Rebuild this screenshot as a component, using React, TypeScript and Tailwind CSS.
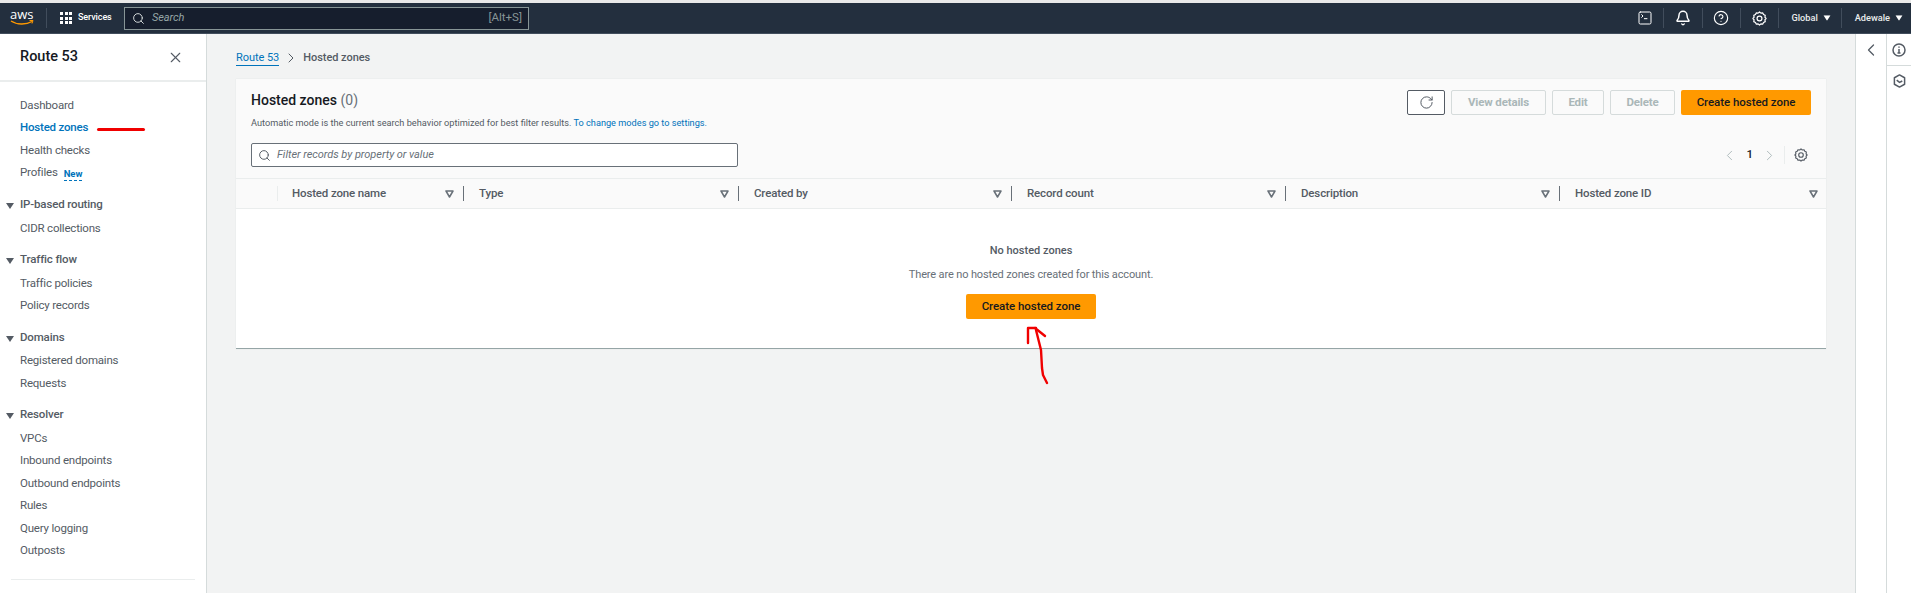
import { Search, X, ChevronLeft, ChevronRight, RotateCw, Bell, CircleHelp, SquareTerminal } from "lucide-react";

const font = "[font-family:Roboto,'Liberation_Sans',sans-serif]";

function Caret({ className = "" }: { className?: string }) {
  return (
    <svg width="8" height="6" viewBox="0 0 8 6" className={className}>
      <path d="M0 0h8L4 6z" fill="currentColor" />
    </svg>
  );
}

function Gear({ size = 16, className = "" }: { size?: number; className?: string }) {
  return (
    <svg width={size} height={size} viewBox="0 0 16 16" fill="none" stroke="currentColor" strokeWidth="1.3" className={className}>
      <path d="M8 1l1.5 1.3 2-.2.8 1.7 1.8.9-.3 2L15 8l-1.2 1.3.3 2-1.8.9-.8 1.7-2-.2L8 15l-1.5-1.3-2 .2-.8-1.7-1.8-.9.3-2L1 8l1.2-1.3-.3-2 1.8-.9.8-1.7 2 .2z" strokeLinejoin="round" />
      <circle cx="8" cy="8" r="2.6" />
    </svg>
  );
}

function NavLink({ label, active, badge }: { label: string; active?: boolean; badge?: boolean }) {
  return (
    <div className={`h-[22.5px] flex items-center pl-5 text-[11.5px] tracking-[-0.2px] ${active ? "text-[#0073bb] font-medium" : "text-[#545b64]"}`}>
      <span>{label}</span>
      {active && <span className="ml-[9px] mt-[3px] h-[3px] w-[48px] rounded-full bg-[#f00000]" />}
      {badge && <span className="ml-[6px] text-[9.5px] font-bold tracking-normal text-[#0073bb] border-b border-dashed border-[#0073bb] leading-[13px] mt-[3px]">New</span>}
    </div>
  );
}

function NavSection({ label, items, mb = "mb-[8.5px]" }: { label: string; items: string[]; mb?: string }) {
  return (
    <div className={mb}>
      <div className="h-[24px] flex items-center text-[11.5px] tracking-[-0.15px] font-medium text-[#545b64]">
        <Caret className="ml-[6px] mr-[6px] mt-[2px] text-[#545b64]" />
        <span>{label}</span>
      </div>
      {items.map((i) => (
        <NavLink key={i} label={i} />
      ))}
    </div>
  );
}

function Sidebar() {
  return (
    <aside className="w-[207px] shrink-0 bg-white border-r border-[#d5dbdb] h-full overflow-hidden">
      <div className="h-[48px] border-b-2 border-[#eaeded] flex items-center justify-between pl-5 pr-[22px] text-[#16191f]">
        <span className="text-[14.5px] font-medium">Route 53</span>
        <X size={17} strokeWidth={1.6} className="text-[#545b64]" />
      </div>
      <div className="pt-[12px]">
        <div className="mb-[9px]">
          <NavLink label="Dashboard" />
          <NavLink label="Hosted zones" active />
          <NavLink label="Health checks" />
          <NavLink label="Profiles" badge />
        </div>
        <NavSection label="IP-based routing" items={["CIDR collections"]} />
        <NavSection label="Traffic flow" items={["Traffic policies", "Policy records"]} />
        <NavSection label="Domains" items={["Registered domains", "Requests"]} />
        <NavSection label="Resolver" items={["VPCs", "Inbound endpoints", "Outbound endpoints", "Rules", "Query logging", "Outposts"]} mb="mb-[17px]" />
        <div className="mx-[11px] h-px bg-[#eaeded]" />
      </div>
    </aside>
  );
}

function TopNav() {
  const Sep = () => <span className="block h-[20px] w-px bg-[#414d5c]" />;
  return (
    <div className="h-[31px] shrink-0 bg-[#232f3e] border-b border-[#414d5c] flex items-center text-white">
      <div className="w-[46px] pl-[10px] flex flex-col items-start leading-none">
        <span className="text-[13px] leading-[11px] -mt-[2px] [font-family:'Open_Sans',sans-serif]">aws</span>
        <svg width="24" height="6" viewBox="0 0 24 6">
          <path d="M1 1c6 4 15 4 21 .5" stroke="#ff9900" strokeWidth="1.4" fill="none" />
          <path d="M19.5 0.5l3.5 0-1 3" stroke="#ff9900" strokeWidth="1" fill="none" />
        </svg>
      </div>
      <Sep />
      <div className="ml-[13px] grid grid-cols-3 gap-[1.5px] w-[12px]">
        {Array.from({ length: 9 }).map((_, i) => (
          <span key={i} className="w-[3px] h-[3px] bg-white" />
        ))}
      </div>
      <span className="ml-[6px] text-[9px] font-medium w-[46px] tracking-[-0.1px]">Services</span>
      <div className="w-[405px] h-[23px] bg-[#161e2d] border border-[#879596] flex items-center pl-[7px] pr-[6px]">
        <Search size={13} strokeWidth={1.8} className="text-[#d5dbdb]" />
        <span className="ml-[7px] italic text-[11px] tracking-[-0.1px] text-[#95a5a6]">Search</span>
        <span className="ml-auto text-[11.5px] text-[#879596]">[Alt+S]</span>
      </div>
      <div className="ml-auto flex items-center">
        <SquareTerminal size={16} strokeWidth={1.5} />
        <span className="ml-[10px]"><Sep /></span>
        <Bell size={16} strokeWidth={2.2} className="ml-[11px]" />
        <span className="ml-[11px]"><Sep /></span>
        <CircleHelp size={16} strokeWidth={1.7} className="ml-[10px]" />
        <span className="ml-[11px]"><Sep /></span>
        <Gear size={15} className="ml-[11px]" />
        <span className="ml-[11px]"><Sep /></span>
        <span className="ml-[12px] text-[9.2px] font-medium text-[#eaeded]">Global</span>
        <Caret className="ml-[5px] scale-90" />
        <span className="ml-[10px]"><Sep /></span>
        <span className="ml-[13px] text-[9.2px] font-medium text-[#eaeded]">Adewale</span>
        <Caret className="ml-[5px] mr-[8px] scale-90" />
      </div>
    </div>
  );
}

function Btn({ label, w }: { label: string; w: string }) {
  return (
    <span className={`${w} h-[25px] flex items-center justify-center rounded-[2px] border border-[#d5dbdb] bg-[#fafafa] text-[11.5px] font-bold tracking-[-0.15px] text-[#aab7b8]`}>
      {label}
    </span>
  );
}

function Primary() {
  return (
    <span className="w-[130px] h-[25px] flex items-center justify-center rounded-[2px] bg-[#ff9900] text-[11.5px] font-medium tracking-[-0.05px] text-[#16191f]">
      Create hosted zone
    </span>
  );
}

function Tri({ last }: { last?: boolean }) {
  return (
    <svg width="9" height="8" viewBox="0 0 9 8" className={`ml-auto ${last ? "mr-[8px]" : "mr-[9px]"}`}>
      <path d="M1 1h7L4.5 7z" fill="none" stroke="#687078" strokeWidth="1.5" strokeLinejoin="round" />
    </svg>
  );
}

function Th({ label, w, last }: { label: string; w: string; last?: boolean }) {
  return (
    <div className={`${w} h-full flex items-center`}>
      <span className="h-[15px] w-px bg-[#687078]" />
      <span className="ml-[15px] text-[11.5px] font-medium tracking-[-0.15px] text-[#545b64]">{label}</span>
      <Tri last={last} />
    </div>
  );
}

function Card() {
  return (
    <section className="mt-[14px] h-[270px] w-[1590px] bg-white border-b border-[#95a5a6] shadow-[0_0_1px_#d5dbdb] flex flex-col">
      <div className="h-[100px] bg-[#fafafa] border-b border-[#eaeded] pl-[15px] pr-[15px] pt-[11px]">
        <div className="flex items-start">
          <div>
            <div className="text-[14px] font-medium leading-[20px] text-[#16191f]">
              Hosted zones <span className="font-normal text-[#687078]">(0)</span>
            </div>
            <div className="mt-[7px] text-[9.2px] leading-[12px] text-[#545b64]">
              Automatic mode is the current search behavior optimized for best filter results.{" "}
              <span className="text-[#0073bb]">To change modes go to settings.</span>
            </div>
          </div>
          <div className="ml-auto flex items-center gap-[6px]">
            <span className="w-[38px] h-[25px] flex items-center justify-center rounded-[2px] border border-[#545b64] bg-white">
              <RotateCw size={15} strokeWidth={1.6} className="text-[#545b64]" />
            </span>
            <Btn label="View details" w="w-[95px]" />
            <Btn label="Edit" w="w-[52px]" />
            <Btn label="Delete" w="w-[65px]" />
            <Primary />
          </div>
        </div>
        <div className="mt-[14px] flex items-center">
          <div className="w-[487px] h-[24px] bg-white border border-[#687078] rounded-[2px] flex items-center pl-[6px]">
            <Search size={13} strokeWidth={1.8} className="text-[#545b64]" />
            <span className="ml-[6px] italic text-[11px] text-[#687078] tracking-[-0.05px]">Filter records by property or value</span>
          </div>
          <div className="ml-auto flex items-center text-[#aab7b8]">
            <ChevronLeft size={17} strokeWidth={1.3} />
            <span className="mx-[8px] text-[11.5px] font-medium text-[#16191f]">1</span>
            <ChevronRight size={17} strokeWidth={1.3} />
            <span className="ml-[6px] h-[18px] w-px bg-[#eaeded]" />
            <Gear size={14} className="ml-[9px] mr-[3px] text-[#545b64]" />
          </div>
        </div>
      </div>
      <div className="h-[30px] bg-[#fafafa] border-b border-[#eaeded] flex items-center">
        <div className="w-[41px] shrink-0" />
        <div className="w-[186px] h-full flex items-center">
          <span className="h-[15px] w-px bg-[#eaeded]" />
          <span className="ml-[14px] text-[11.5px] font-medium tracking-[-0.15px] text-[#545b64]">Hosted zone name</span>
          <Tri />
        </div>
        <Th label="Type" w="w-[275px]" />
        <Th label="Created by" w="w-[273px]" />
        <Th label="Record count" w="w-[274px]" />
        <Th label="Description" w="w-[274px]" />
        <Th label="Hosted zone ID" w="w-[267px]" last />
      </div>
      <div className="flex-1 flex flex-col items-center pt-[34px]">
        <div className="text-[11px] font-medium leading-[16px] text-[#545b64]">No hosted zones</div>
        <div className="mt-[8px] text-[11px] tracking-[-0.14px] leading-[16px] text-[#687078]">There are no hosted zones created for this account.</div>
        <div className="mt-[11px]"><Primary /></div>
      </div>
    </section>
  );
}

function RightRail() {
  return (
    <div className="w-[56px] shrink-0 h-full flex bg-white">
      <div className="w-[31px] border-l border-[#d5dbdb] flex justify-center pt-[6px]">
        <ChevronLeft size={20} strokeWidth={1.5} className="text-[#545b64]" />
      </div>
      <div className="w-[25px] border-l border-[#d5dbdb]">
        <div className="h-[32px] border-b border-[#d5dbdb] flex items-center justify-center">
          <svg width="14" height="14" viewBox="0 0 14 14" fill="none" stroke="#545b64" strokeWidth="1.5">
            <circle cx="7" cy="7" r="6" />
            <path d="M7 6v4M5.5 10h3M7 3.5v1.2" />
          </svg>
        </div>
        <div className="flex justify-center pt-[8px]">
          <svg width="13" height="14" viewBox="0 0 14 15" fill="none" stroke="#545b64" strokeWidth="1.6">
            <path d="M7 1l5.5 3v7L7 14l-5.5-3V4z" strokeLinejoin="round" />
            <path d="M4 6.5L7 9l3-1.5" />
          </svg>
        </div>
      </div>
    </div>
  );
}

export default function App() {
  return (
    <div className={`${font} relative h-[593px] w-[1911px] overflow-hidden bg-[#f2f3f3] flex flex-col pt-[3px]`}>
      <div className="absolute top-0 left-0 right-0 h-[3px] bg-[#e9e9e9]" />
      <TopNav />
      <div className="flex-1 flex min-h-0">
        <Sidebar />
        <main className="flex-1 pl-[29px] pt-[17px]">
          <div className="flex items-center h-[14px] text-[11px] tracking-[-0.05px]">
            <span className="text-[#0073bb] border-b border-[#0073bb] leading-[15px]">Route 53</span>
            <ChevronRight size={16} strokeWidth={1.5} className="mx-[4px] text-[#545b64]" />
            <span className="font-medium text-[#545b64]">Hosted zones</span>
          </div>
          <Card />
        </main>
        <RightRail />
      </div>
      <svg width="26" height="62" viewBox="0 0 26 62" className="absolute left-[1024px] top-[325px] pointer-events-none" fill="none" stroke="#f00000" strokeWidth="2.4" strokeLinecap="round" strokeLinejoin="round">
        <path d="M23 58l-4-8-1-7-1-18-5-20" />
        <path d="M4 18V3h8" />
        <path d="M11 3l10 8" />
      </svg>
    </div>
  );
}
